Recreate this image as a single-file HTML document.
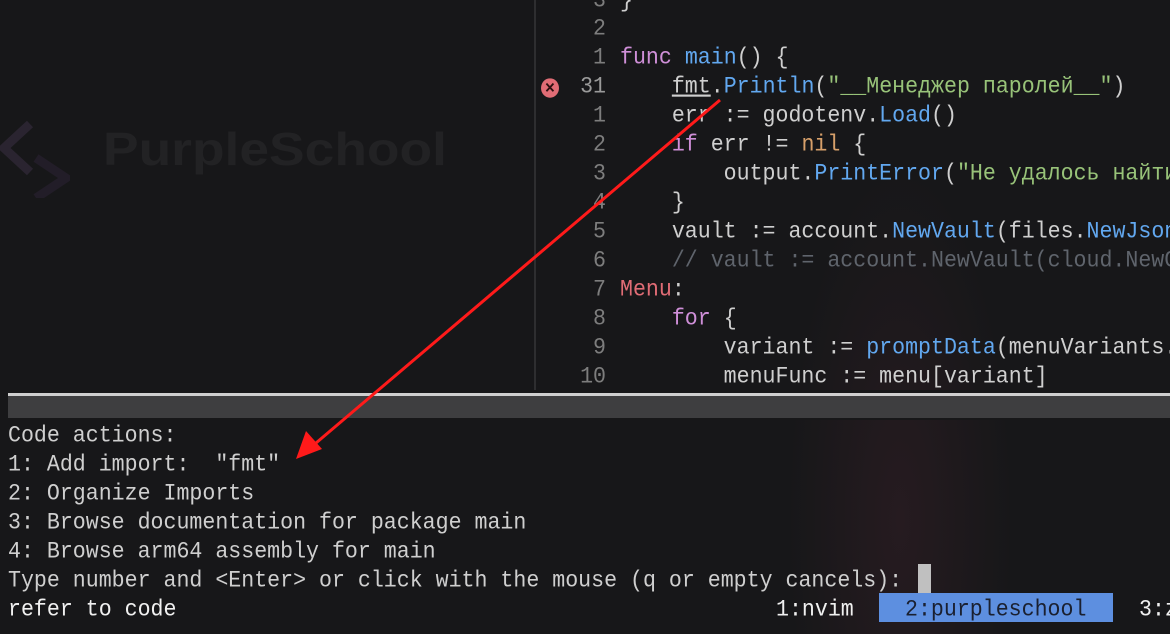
<!DOCTYPE html><html><head><meta charset="utf-8"><style>
body{margin:0;width:1170px;height:634px;overflow:hidden;background:#171719;font-family:"Liberation Mono","DejaVu Sans Mono",monospace;font-size:21.6px;color:#cfcfcf;position:relative}
.r{position:absolute;height:29px;line-height:29px;white-space:pre;transform:scaleY(1.08);margin-top:2px}
.n{position:absolute;left:540px;width:66px;text-align:right;color:#7d7d7d}
.c{position:absolute;left:620px}
.k{color:#cf8fd8}.f{color:#62a8f0}.s{color:#98c379}.o{color:#d7a06a}.m{color:#e06c75}.g{color:#5f646c}
</style></head><body>
<div style="position:absolute;left:0;top:0;width:1170px;height:634px;background:radial-gradient(ellipse 160px 500px at 900px 520px,#261b20 0%,rgba(0,0,0,0) 70%)"></div>
<div style="position:absolute;left:103px;top:122px;font-family:'Liberation Sans',sans-serif;font-weight:bold;font-size:46px;color:#222224;transform:scaleX(1.16);transform-origin:left">PurpleSchool</div>
<svg style="position:absolute;left:0;top:118px" width="70" height="80"><path d="M30 6 L4 30 L30 54" stroke="#2a2430" stroke-width="9" fill="none"/><path d="M36 40 L66 60 L36 80" stroke="#221d28" stroke-width="9" fill="none"/></svg>
<div style="position:absolute;left:534px;top:0;width:2px;height:390px;background:#2e2e30"></div>
<div class="r" style="top:-15px"><span class="n">3</span><span class="c">}</span></div>
<div class="r" style="top:13px"><span class="n">2</span></div>
<div class="r" style="top:42px"><span class="n">1</span><span class="c"><span class="k">func</span> <span class="f">main</span>() {</span></div>
<div class="r" style="top:71px"><span class="n" style="color:#9a9a9a">31</span><span style="position:absolute;left:541px;top:6px;width:18px;height:18px;border-radius:50%;background:#e06c75;color:#2a1010;font-size:13px;line-height:18px;text-align:center;font-weight:bold;font-family:'Liberation Sans'">✕</span><span class="c">    <span style="text-decoration:underline">fmt</span>.<span class="f">Println</span>(<span class="s">"__Менеджер паролей__"</span>)</span></div>
<div class="r" style="top:100px"><span class="n">1</span><span class="c">    err := godotenv.<span class="f">Load</span>()</span></div>
<div class="r" style="top:129px"><span class="n">2</span><span class="c">    <span class="k">if</span> err != <span class="o">nil</span> {</span></div>
<div class="r" style="top:158px"><span class="n">3</span><span class="c">        output.<span class="f">PrintError</span>(<span class="s">"Не удалось найти</span></span></div>
<div class="r" style="top:187px"><span class="n">4</span><span class="c">    }</span></div>
<div class="r" style="top:216px"><span class="n">5</span><span class="c">    vault := account.<span class="f">NewVault</span>(files.<span class="f">NewJson</span></span></div>
<div class="r" style="top:245px"><span class="n">6</span><span class="c g">    // vault := account.NewVault(cloud.NewC</span></div>
<div class="r" style="top:274px"><span class="n">7</span><span class="c"><span class="m">Menu</span>:</span></div>
<div class="r" style="top:303px"><span class="n">8</span><span class="c">    <span class="k">for</span> {</span></div>
<div class="r" style="top:332px"><span class="n">9</span><span class="c">        variant := <span class="f">promptData</span>(menuVariants.</span></div>
<div class="r" style="top:361px"><span class="n">10</span><span class="c">        menuFunc := menu[variant]</span></div>
<div style="position:absolute;left:0;top:390px;width:1170px;height:30px;background:#171719"></div>
<div style="position:absolute;left:8px;top:393px;width:1162px;height:3px;background:#cfcfcf"></div>
<div style="position:absolute;left:8px;top:396px;width:1162px;height:22px;background:#3e3e40"></div>
<div class="r" style="top:420px;left:8px">Code actions:</div>
<div class="r" style="top:449px;left:8px">1: Add import:  "fmt"</div>
<div class="r" style="top:478px;left:8px">2: Organize Imports</div>
<div class="r" style="top:507px;left:8px">3: Browse documentation for package main</div>
<div class="r" style="top:536px;left:8px">4: Browse arm64 assembly for main</div>
<div class="r" style="top:565px;left:8px">Type number and &lt;Enter&gt; or click with the mouse (q or empty cancels):</div>
<div style="position:absolute;left:918px;top:564px;width:13px;height:29px;background:#c0c0c0"></div>
<div class="r" style="top:594px;left:8px;color:#f0f0f0">refer to code</div>
<div class="r" style="top:594px;left:776px;color:#f0f0f0">1:nvim</div>
<div style="position:absolute;left:879px;top:593px;width:234px;height:29px;background:#5d8fe0"></div>
<div class="r" style="top:594px;left:905px;color:#1a2030">2:purpleschool</div>
<div class="r" style="top:594px;left:1139px;color:#f0f0f0">3:z</div>
<svg style="position:absolute;left:0;top:0" width="1170" height="634"><line x1="720" y1="100" x2="316" y2="443" stroke="#ff1a1a" stroke-width="3"/><path d="M296 459 L306 431 L322 449 Z" fill="#ff1a1a"/></svg>
</body></html>
